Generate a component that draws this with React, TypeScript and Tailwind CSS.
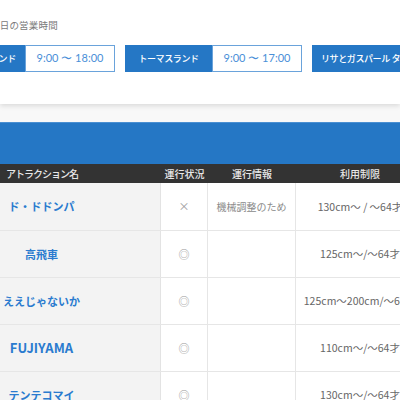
const HOURS = [
  { park: "富士急ハイランド", time: "9:00 〜 18:00" },
  { park: "トーマスランド", time: "9:00 〜 17:00" },
  { park: "リサとガスパール タウン", time: "9:00 〜 17:00" },
];

const RIDES = [
  { name: "ド・ドドンパ", status: "×", info: "機械調整のため", limit: "130cm〜 / 〜64才" },
  { name: "高飛車", status: "◎", info: "", limit: "125cm〜/〜64才" },
  { name: "ええじゃないか", status: "◎", info: "", limit: "125cm〜200cm/〜64才" },
  { name: "FUJIYAMA", status: "◎", info: "", limit: "110cm〜/〜64才" },
  { name: "テンテコマイ", status: "◎", info: "", limit: "130cm〜/〜64才" },
];

export default function App() {
  return (
    <div
      className="w-[400px] h-[400px] overflow-hidden bg-[#f8f8f8]"
      style={{ fontFamily: '"Noto Sans CJK JP", "Noto Sans", sans-serif' }}
    >
      {/* Opening hours card */}
      <div className="h-[104px] bg-white shadow-[0_2px_5px_rgba(0,0,0,0.12)] pt-[18px]">
        <p className="ml-[-10px] text-[9.5px] leading-[14px] tracking-[0.2px] text-[#7a7a7a] whitespace-nowrap">
          本日の営業時間
        </p>
        <div className="flex gap-[10px] ml-[-62px] mt-[13px] whitespace-nowrap">
          {HOURS.map((h, i) => (
            <div key={h.park} className="flex shrink-0 h-[27px]">
              <div
                className={`${i === 2 ? "w-[130px] justify-start pl-[9px]" : "w-[87px] justify-center"} flex items-center bg-[#2577c5] text-white text-[9px] font-medium tracking-[-0.4px]`}
              >
                {h.park}
              </div>
              {i < 2 && (
                <div
                  className="w-[90px] flex items-center justify-center bg-white border border-[#6aa3db] text-[#4a8fd8] text-[11px]"
                  style={{ fontFamily: "Lato, sans-serif" }}
                >
                  {h.time}
                </div>
              )}
            </div>
          ))}
        </div>
      </div>

      {/* Blue band */}
      <div className="mt-[18px] h-[42px] bg-[#2577c5] border-t border-[#4a8fd2]" />

      {/* Attractions table */}
      <div className="ml-[-77px] w-[600px]">
        <div className="flex h-[19px] bg-[#333333] text-[10px] font-medium text-[#e8e8e8] items-center">
          <div className="w-[238px] text-center tracking-[-1px]">アトラクション名</div>
          <div className="w-[47px] text-center">運行状況</div>
          <div className="w-[88px] text-center">運行情報</div>
          <div className="w-[128px] text-center">利用制限</div>
        </div>
        {RIDES.map((r, i) => (
          <div
            key={r.name}
            className={`flex ${i === 0 ? "h-[48px]" : "h-[47px]"} border-b border-[#e6e6e6] bg-white`}
          >
            <div
              className={`w-[238px] flex items-center justify-center bg-[#f3f3f3] border-r border-[#e3e3e3] font-bold text-[#2a7bcf] ${r.name === "FUJIYAMA" ? "text-[13px]" : "text-[11px]"}`}
            >
              {r.name}
            </div>
            <div className="w-[47px] flex items-center justify-center border-r border-[#e6e6e6] text-[11px] text-[#999]">
              {r.status}
            </div>
            <div className="w-[88px] flex items-center justify-center border-r border-[#e6e6e6] text-[10px] text-[#8a8a8a] whitespace-nowrap">
              {r.info}
            </div>
            <div className="w-[128px] flex items-center justify-center text-[10.5px] text-[#666] whitespace-nowrap">
              {r.limit}
            </div>
          </div>
        ))}
      </div>
    </div>
  );
}
